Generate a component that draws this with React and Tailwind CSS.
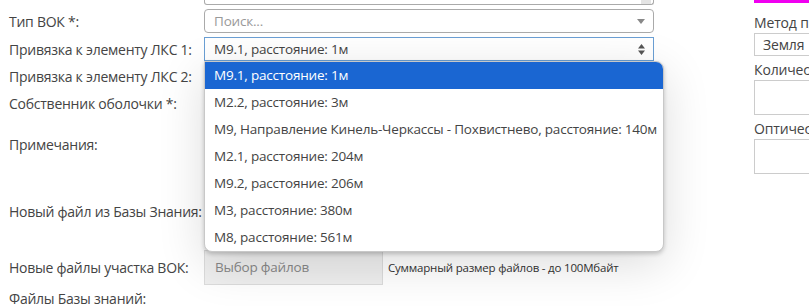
import { useState } from "react";

const options = [
  "М9.1, расстояние: 1м",
  "М2.2, расстояние: 3м",
  "М9, Направление Кинель-Черкассы - Похвистнево, расстояние: 140м",
  "М2.1, расстояние: 204м",
  "М9.2, расстояние: 206м",
  "М3, расстояние: 380м",
  "М8, расстояние: 561м",
];

function Label({ children, className = "" }) {
  return (
    <div className={`w-[204px] shrink-0 pl-[9px] text-[14px] tracking-[-0.25px] text-[#444] whitespace-nowrap ${className}`}>
      {children}
    </div>
  );
}

export default function App() {
  const [selected] = useState(0);

  return (
    <div
      className="relative w-[809px] h-[306px] overflow-hidden bg-white"
      style={{ fontFamily: '"Open Sans", "Noto Sans", sans-serif' }}
    >
      <div className="flex">
        {/* left form */}
        <div className="w-[754px] shrink-0 flex flex-col">
          <div className="flex h-[5px]">
            <Label />
            <div className="relative w-[450px] h-[5px] border border-t-0 border-[#aaa] rounded-b-[3px] bg-white">
              <div className="absolute right-[2px] bottom-0 w-[10px] h-[4px] bg-[#e4e4e4]" />
            </div>
          </div>

          <div className="flex items-center h-[24px] mt-[4px]">
            <Label>Тип ВОК *:</Label>
            <div className="relative w-[450px] h-[24px] border border-[#aaa] rounded-[4px] flex items-center pl-[9px] text-[13.5px] tracking-[-0.2px] text-[#999]">
              Поиск...
              <svg className="absolute right-[8px] top-[9px]" width="8" height="5" viewBox="0 0 8 5">
                <path d="M0 0h8L4 5z" fill="#888" />
              </svg>
            </div>
          </div>

          <div className="flex items-center h-[24px] mt-[4px]">
            <Label>Привязка к элементу ЛКС 1:</Label>
            <div className="relative w-[450px] h-[24px] border border-[#6a9fd4] flex items-center pl-[9px] text-[13.5px] tracking-[-0.2px] text-[#444]">
              {options[selected]}
              <svg className="absolute right-[8px] top-[6px]" width="7" height="11" viewBox="0 0 7 11">
                <path d="M0 4.5h7L3.5 0z M0 6.5h7L3.5 11z" fill="#555" />
              </svg>
            </div>
          </div>

          <div className="flex items-center h-[24px] mt-[3px]">
            <Label>Привязка к элементу ЛКС 2:</Label>
            <div className="w-[450px] h-[24px] border border-[#aaa]" />
          </div>

          <div className="flex items-center h-[24px] mt-[3px]">
            <Label>Собственник оболочки *:</Label>
            <div className="w-[450px] h-[24px] border border-[#aaa]" />
          </div>

          <div className="flex items-center h-[52px] mt-[3px]">
            <Label>Примечания:</Label>
            <div className="w-[450px] h-[52px] border border-[#aaa]" />
          </div>

          <div className="flex items-center h-[74px] mt-[4px]">
            <Label>Новый файл из Базы Знания:</Label>
            <div className="w-[450px] h-[30px] border border-[#aaa]" />
          </div>

          <div className="flex items-center h-[35px] mt-[2px]">
            <Label>Новые файлы участка ВОК:</Label>
            <div className="w-[179px] h-[35px] border border-[#dcdcdc] bg-[#efefef] flex items-center pl-[10px] text-[13.5px] tracking-[-0.2px] text-[#888]">
              Выбор файлов
            </div>
            <div className="pl-[5px] text-[11.5px] tracking-[-0.2px] text-[#333] whitespace-nowrap">
              Суммарный размер файлов - до 100Мбайт
            </div>
          </div>

          <div className="flex items-center h-[18px] mt-[4px]">
            <Label>Файлы Базы знаний:</Label>
          </div>
        </div>

        {/* right column */}
        <div className="flex-1 flex flex-col text-[14px] tracking-[-0.15px] text-[#444] whitespace-nowrap">
          <div className="h-[3px] bg-[#f000f0]" />
          <div className="h-[19px] mt-[10px] flex items-center">Метод п</div>
          <div className="h-[23px] mt-[1px] border border-[#ccc] border-r-0 flex items-center pl-[8px]">
            Земля
          </div>
          <div className="h-[19px] mt-[4px] flex items-center">Количес</div>
          <div className="h-[35px] mt-[1px] border border-[#ccc] border-r-0" />
          <div className="h-[19px] mt-[4px] flex items-center">Оптичес</div>
          <div className="h-[35px] mt-[1px] border border-[#ccc] border-r-0" />
        </div>
      </div>

      {/* open dropdown list */}
      <div className="absolute left-[204px] top-[61px] w-[460px] bg-white border border-[#c8c8c8] rounded-b-[8px] rounded-tr-[8px] overflow-hidden shadow-[0_2px_4px_rgba(0,0,0,0.2),0_12px_48px_rgba(0,0,0,0.14)]">
        {options.map((o, i) => (
          <div
            key={o}
            className={`h-[27px] flex items-center pl-[9px] text-[13.5px] tracking-[-0.2px] whitespace-nowrap ${
              i === selected ? "bg-[#1a66d2] text-white" : "text-[#444]"
            }`}
          >
            {o}
          </div>
        ))}
      </div>
    </div>
  );
}
